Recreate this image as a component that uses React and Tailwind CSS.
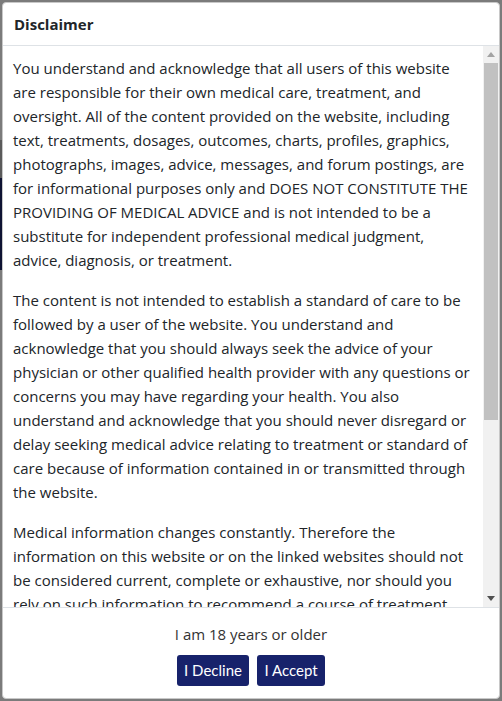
import React from "react";

const p1 = [
  "You understand and acknowledge that all users of this website",
  "are responsible for their own medical care, treatment, and",
  "oversight. All of the content provided on the website, including",
  "text, treatments, dosages, outcomes, charts, profiles, graphics,",
  "photographs, images, advice, messages, and forum postings, are",
  "for informational purposes only and DOES NOT CONSTITUTE THE",
  "PROVIDING OF MEDICAL ADVICE and is not intended to be a",
  "substitute for independent professional medical judgment,",
  "advice, diagnosis, or treatment.",
];
const p2 = [
  "The content is not intended to establish a standard of care to be",
  "followed by a user of the website. You understand and",
  "acknowledge that you should always seek the advice of your",
  "physician or other qualified health provider with any questions or",
  "concerns you may have regarding your health. You also",
  "understand and acknowledge that you should never disregard or",
  "delay seeking medical advice relating to treatment or standard of",
  "care because of information contained in or transmitted through",
  "the website.",
];
const p3 = [
  "Medical information changes constantly. Therefore the",
  "information on this website or on the linked websites should not",
  "be considered current, complete or exhaustive, nor should you",
  "rely on such information to recommend a course of treatment",
];

function Para({ lines, last }) {
  return (
    <p className={last ? "" : "mb-4"}>
      {lines.map((l, i) => (
        <React.Fragment key={i}>
          {l}
          {i < lines.length - 1 && <br />}
        </React.Fragment>
      ))}
    </p>
  );
}

export default function App() {
  return (
    <div className="relative w-[502px] h-[701px] overflow-hidden bg-[#7b7b7b] font-['Open_Sans',sans-serif]">
      <div className="absolute left-0 top-[178px] w-[10px] h-[92px] bg-[#0e1232]" />
      <div className="absolute left-0 top-[140px] w-[10px] h-[38px] bg-[#5a5a5a]" />
      <div className="relative mx-[2px] mt-[2px] h-[697px] flex flex-col bg-white rounded-[4px] border border-[#c8c8c8] overflow-hidden">
        <div className="h-[43px] shrink-0 flex items-center px-[11px] border-b border-[#dee2e6]">
          <h5 className="text-[15px] font-bold text-[#212529] leading-6">Disclaimer</h5>
        </div>
        <div className="flex-1 min-h-0 flex">
          <div className="flex-1 overflow-hidden pl-[10px] pr-[8px] pt-[10px] text-[15px] leading-6 text-[#212529] whitespace-nowrap">
            <Para lines={p1} />
            <Para lines={p2} />
            <Para lines={p3} last />
          </div>
          <div className="w-[16px] shrink-0 flex flex-col bg-[#f1f1f1]">
            <div className="h-[17px] flex items-center justify-center">
              <svg width="8" height="5" viewBox="0 0 8 5"><path d="M0 5L4 0L8 5Z" fill="#a3a3a3" /></svg>
            </div>
            <div className="mx-[1px] h-[357px] bg-[#c1c1c1]" />
            <div className="flex-1" />
            <div className="h-[17px] flex items-center justify-center">
              <svg width="8" height="5" viewBox="0 0 8 5"><path d="M0 0L8 0L4 5Z" fill="#505050" /></svg>
            </div>
          </div>
        </div>
        <div className="shrink-0 h-[91px] border-t border-[#dee2e6] flex flex-col items-center pt-[14px]">
          <div className="text-[15px] leading-6 text-[#333333]">I am 18 years or older</div>
          <div className="mt-[9px] flex gap-[8px] font-['Lato',sans-serif]">
            <button className="h-[31px] w-[72px] rounded-[3px] bg-[#17226b] text-white text-[15px]">I Decline</button>
            <button className="h-[31px] w-[68px] rounded-[3px] bg-[#17226b] text-white text-[15px]">I Accept</button>
          </div>
        </div>
      </div>
    </div>
  );
}
